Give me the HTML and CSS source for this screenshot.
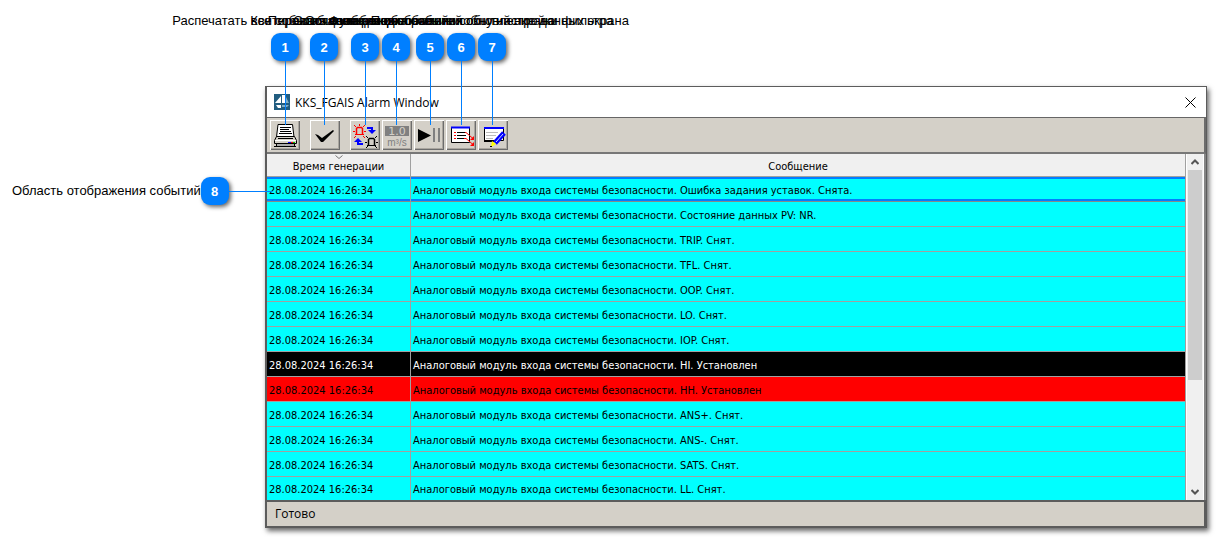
FILE: index.html
```html
<!DOCTYPE html>
<html lang="ru">
<head>
<meta charset="utf-8">
<title>KKS_FGAIS Alarm Window</title>
<link rel="stylesheet" href="styles.css">
</head>
<body>
<main class="page">
  <section class="window">
    <header class="titlebar">
      <svg class="logo" viewBox="0 0 16 16" aria-hidden="true"><path d="M0 0h16v16H0z" fill="#215d80"/><path d="M1 9L7 2v7zM8 1h3v8H8zM2 11h5v3H4z" fill="#fff"/><path d="M12 3l3 6h-3zM8 11h7l-2 2H8z" fill="#7fb0c8"/></svg>
      <h1 class="title">KKS_FGAIS Alarm Window</h1>
      <button class="close" aria-label="Закрыть"><svg viewBox="0 0 11 11"><path d="M.5.5l10 10M10.5.5l-10 10" stroke="#000" fill="none"/></svg></button>
    </header>
    <div class="toolbar">
      <button class="tool" aria-label="Печать"><svg viewBox="0 0 30 29"><path d="M8 3.500h14.500l1.500 12.500H6.500z" fill="#fff" stroke="#000"/><path d="M10 6.500h11M10 8.500h9M10 10.500h11M9 12.500h13" stroke="#000"/><path d="M6.500 15.500h18l2 4v3h-22v-3z" fill="#d4d0c8" stroke="#000"/><path d="M8 17.500h15" stroke="#000"/><path d="M5 19.500h21" stroke="#fff"/><path d="M6.500 22.500h18v3h-18z" fill="#aaa" stroke="#000"/><path d="M4 25.500h22" stroke="#000"/><path d="M18 21h3v1h-3z" fill="#00f"/><path d="M21 21h2v1h-2z" fill="red"/><path d="M23 21h2v1h-2z" fill="#0c0"/></svg></button>
      <button class="tool wide" aria-label="Квитировать"><svg viewBox="0 0 30 29"><path d="M5 13l3 1 4 3 11-8 1 1-11 11h-2z" fill="#000"/></svg></button>
      <button class="tool wide" aria-label="Переключить"><svg viewBox="0 0 30 29" fill="none"><g stroke="red"><path d="M6.500 13V7.500l1-1h4l1 1V13" stroke-width="1.500"/><path d="M5 13.500h9M9.500 3v2M4 4l2 2M15 4l-2 2M3 10.500h2M14 10.500h2M4 17l2-2M15 17l-2-2"/></g><g stroke="#000"><path d="M18.500 24v-5.500l1-1h4l1 1V24" stroke-width="1.500"/><path d="M17 24.500h9M16 15l2 2M27 15l-2 2M15 21.500h2M26 21.500h2M16 27l2-2M27 27l-2-2"/></g><path d="M17 7h5v3M13 23H8v-3" stroke="#00f" stroke-width="2"/><path d="M18 9h8l-4 4zM4 21h8l-4-4z" fill="#00f"/></svg></button>
      <button class="tool" aria-label="Значения"><svg viewBox="0 0 30 29"><path d="M3 5h24v10H3z" fill="#808080"/><text class="icon-value" x="15" y="14" text-anchor="middle">1.0</text><text class="icon-unit" x="15" y="25" text-anchor="middle">m³/s</text></svg></button>
      <button class="tool" aria-label="Пуск или пауза"><svg viewBox="0 0 30 29"><path d="M4 8v13l13-6.500z"/><path d="M19 7h2v14h-2zM24 7h2v14h-2z" fill="#808080"/></svg></button>
      <button class="tool" aria-label="Список"><svg viewBox="0 0 30 29" fill="none"><path d="M5.500 6.500h18v15h-18z" fill="#fff" stroke="#000"/><path d="M5 6.500h19" stroke="#00f" stroke-width="2"/><path d="M8 11.500h2M8 14.500h2M8 17.500h2" stroke="red"/><path d="M11 11.500h8M11 14.500h9M11 17.500h7" stroke="#000"/><path d="M19 11.500h1l7 6M18 17.500h2l7 6" stroke="red"/><path d="M28 15v4h-4zM28 21v4h-4z" fill="red"/></svg></button>
      <button class="tool" aria-label="Фильтр"><svg viewBox="0 0 30 29" fill="none"><path d="M6.500 7.500h19v12h-19z" fill="#fff" stroke="#000"/><path d="M6 20h14" stroke="#000" stroke-width="2"/><path d="M6 7h20" stroke="#00f" stroke-width="2"/><path d="M8 11.500h12M8 14.500h10M8 17.500h7" stroke="#bbb"/><path d="M26 12L17 22" stroke="#00f" stroke-width="5"/><path d="M25 13l-7 8" stroke="#cdf"/><path d="M14 20l4 3-5 3z" fill="#ff0"/><path d="M12 25h2v1h-2z" fill="#000"/></svg></button>
    </div>
    <div class="content">
      <table class="events">
        <colgroup><col class="time-col"><col></colgroup>
        <thead><tr><th><svg class="sort" viewBox="0 0 8 4" aria-hidden="true"><path d="M.5.5L4 3.500 7.500.5" fill="none" stroke="#777"/></svg>Время генерации</th><th>Сообщение</th></tr></thead>
        <tbody>
          <tr class="selected"><td>28.08.2024 16:26:34</td><td>Аналоговый модуль входа системы безопасности. Ошибка задания уставок. Снята.</td></tr>
          <tr><td>28.08.2024 16:26:34</td><td>Аналоговый модуль входа системы безопасности. Состояние данных PV: NR.</td></tr>
          <tr><td>28.08.2024 16:26:34</td><td>Аналоговый модуль входа системы безопасности. TRIP. Снят.</td></tr>
          <tr><td>28.08.2024 16:26:34</td><td>Аналоговый модуль входа системы безопасности. TFL. Снят.</td></tr>
          <tr><td>28.08.2024 16:26:34</td><td>Аналоговый модуль входа системы безопасности. OOP. Снят.</td></tr>
          <tr><td>28.08.2024 16:26:34</td><td>Аналоговый модуль входа системы безопасности. LO. Снят.</td></tr>
          <tr><td>28.08.2024 16:26:34</td><td>Аналоговый модуль входа системы безопасности. IOP. Снят.</td></tr>
          <tr class="high"><td>28.08.2024 16:26:34</td><td>Аналоговый модуль входа системы безопасности. HI. Установлен</td></tr>
          <tr class="critical"><td>28.08.2024 16:26:34</td><td>Аналоговый модуль входа системы безопасности. HH. Установлен</td></tr>
          <tr><td>28.08.2024 16:26:34</td><td>Аналоговый модуль входа системы безопасности. ANS+. Снят.</td></tr>
          <tr><td>28.08.2024 16:26:34</td><td>Аналоговый модуль входа системы безопасности. ANS-. Снят.</td></tr>
          <tr><td>28.08.2024 16:26:34</td><td>Аналоговый модуль входа системы безопасности. SATS. Снят.</td></tr>
          <tr class="last"><td>28.08.2024 16:26:34</td><td>Аналоговый модуль входа системы безопасности. LL. Снят.</td></tr>
        </tbody>
      </table>
      <div class="scrollbar">
        <button class="arrow" aria-label="Вверх"><svg viewBox="0 0 8 6"><path d="M.5 5L4 1.500 7.500 5" fill="none" stroke="#555" stroke-width="2"/></svg></button>
        <div class="track"><div class="thumb"></div></div>
        <button class="arrow" aria-label="Вниз"><svg viewBox="0 0 8 6"><path d="M.5 1L4 4.500 7.500 1" fill="none" stroke="#555" stroke-width="2"/></svg></button>
      </div>
    </div>
    <footer class="status">Готово</footer>
  </section>

  <div class="callout c1"><span class="label">Распечатать все события из таблицы</span><b class="badge">1</b><i class="line"></i></div>
  <div class="callout c2"><span class="label">Квитировать сообщения</span><b class="badge">2</b><i class="line"></i></div>
  <div class="callout c3"><span class="label">Переключение режима событий</span><b class="badge">3</b><i class="line"></i></div>
  <div class="callout c4"><span class="label">Функция отображения</span><b class="badge">4</b><i class="line"></i></div>
  <div class="callout c5"><span class="label">Остановка и обновление событий экрана</span><b class="badge">5</b><i class="line"></i></div>
  <div class="callout c6"><span class="label">Сообщения всех событий и обновление данных экрана</span><b class="badge">6</b><i class="line"></i></div>
  <div class="callout c7"><span class="label">Подключение к окну настройки фильтра</span><b class="badge">7</b><i class="line"></i></div>
  <div class="callout-side"><span class="label">Область отображения событий</span><b class="badge">8</b><i class="side-line"></i></div>
</main>
</body>
</html>
```
FILE: styles.css
```css
* { box-sizing: border-box; }
body { margin: 0; background: #fff; color: #000; font-family: "Liberation Sans", Arial, sans-serif; }
button { padding: 0; border: 0; background: none; font: inherit; }
svg { display: block; }
.page { position: relative; padding: 86px 9px 10px 265px; }

.window { border: 1px solid #5c5c5c; border-left-width: 2px; border-bottom: 2px solid #5c5c5c; background: #d4d0c8; box-shadow: 2px 3px 5px rgba(0, 0, 0, .6); }
.titlebar { display: flex; align-items: center; height: 30px; padding: 0 10px 0 7px; background: #fff; }
.logo { width: 16px; height: 16px; }
.title { flex: 1; margin: 0 0 0 5px; font: 12px "Open Sans", "Noto Sans", sans-serif; }
.close svg { width: 11px; height: 11px; }

.toolbar { display: flex; gap: 2px; padding: 2px 3px; border-top: 1px solid #666; border-right: 2px solid #6c6c6c; border-bottom: 2px solid #777; }
.tool { width: 30px; height: 30px; box-shadow: inset 1px 1px #fff, inset -1px -1px #6c6c6c, inset -2px -2px #aaa69f; }
.tool svg { width: 30px; height: 29px; }
.tool.wide { margin-left: 8px; }
.icon-value { fill: #d4d0c8; font: 11px "DejaVu Sans", sans-serif; }
.icon-unit { fill: #808080; font: 10px "Liberation Sans", sans-serif; }

.content { display: flex; border-right: 2px solid #858585; background: #fff; }
.events { flex: 1; table-layout: fixed; border-collapse: separate; border-spacing: 0; font: 11px/14px "DejaVu Sans Condensed", "DejaVu Sans", sans-serif; }
.time-col { width: 144px; }
th, td { padding: 3px 2px 0; border-right: 1px solid #a0a0a0; border-bottom: 1px solid #a0a0a0; white-space: nowrap; overflow: hidden; }
th { position: relative; height: 23px; background: #f0f0f0; font-weight: 400; }
td { height: 25px; background: #0ff; text-align: left; }
.sort { position: absolute; top: 1px; left: 68px; width: 8px; height: 4px; }
.selected td { border-bottom-color: #888; box-shadow: inset 0 2px #007fff, inset 0 -2px #007fff; }
.high td { background: #000; color: #fff; }
.critical td { background: #f00; }
.last td { height: 23px; border-bottom: 0; }

.scrollbar { display: flex; flex-direction: column; width: 18px; padding: 0 1px; background: #f0f0f0; border-left: 1px solid #fff; border-right: 1px solid #fff; }
.arrow { display: grid; place-items: center; height: 16px; }
.arrow svg { width: 8px; height: 6px; }
.track { flex: 1; }
.thumb { height: 67%; background: #cdcdcd; }
.status { height: 26px; padding: 0 8px; border-top: 2px solid #5c5c5c; border-right: 2px solid #5c5c5c; font: 12px/24px "Open Sans", "Noto Sans", sans-serif; }

.callout { position: absolute; top: 12px; width: 28px; display: flex; flex-direction: column; align-items: center; pointer-events: none; }
.c1 { left: 271px; }
.c2 { left: 310px; }
.c3 { left: 351px; }
.c4 { left: 382px; }
.c5 { left: 416px; }
.c6 { left: 447px; }
.c7 { left: 478px; }
.label { font-size: 13px; line-height: 18px; white-space: nowrap; }
.badge { display: grid; place-items: center; width: 28px; height: 28px; border-radius: 9px; background: #007fff; color: #fff; font-size: 13px; box-shadow: 2px 2px 4px rgba(0, 0, 0, .6); }
.callout .badge { margin-top: 3px; }
.line { width: 1px; height: 64px; background: #007fff; }
.callout-side { position: absolute; top: 177px; left: 12px; display: flex; align-items: center; pointer-events: none; }
.side-line { width: 43px; height: 1px; background: #007fff; }
```
